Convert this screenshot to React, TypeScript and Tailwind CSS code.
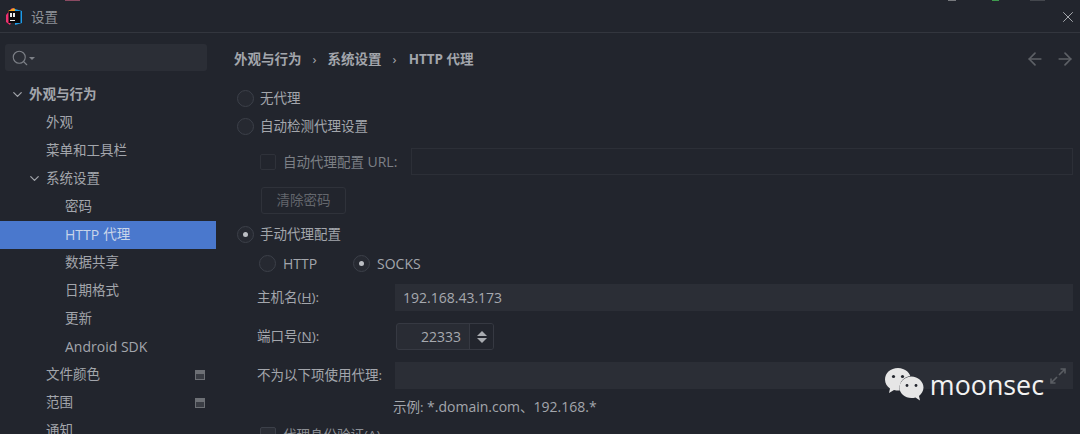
import { ReactNode } from "react";
import { ChevronDown, X, ArrowLeft, ArrowRight, Search } from "lucide-react";

const font = { fontFamily: '"Open Sans", "Noto Sans CJK SC", sans-serif' };

function TreeRow({
  label,
  indent,
  open,
  selected,
  bold,
  badge
}: {
  label: ReactNode;
  indent: string;
  open?: boolean;
  selected?: boolean;
  bold?: boolean;
  badge?: boolean;
}) {
  return (
    <div
      className={`relative flex h-[28px] shrink-0 items-center pb-[2px] ${indent} ${
        selected ? "bg-[#4a78cd] text-[#c9d5ea]" : "text-[#a3a6ac]"
      } ${bold ? "font-bold" : ""}`}
    >
      {open ? <ChevronDown className="absolute ml-[-19px] h-[15px] w-[15px] text-[#a0a3a9]" strokeWidth={2} /> : null}
      {label}
      {badge ? (
        <span className="absolute right-[11px] top-[9px] flex h-[10px] w-[10px] items-center justify-center bg-[#6d7075] pt-[2px]">
          <span className="h-[5px] w-[8px] bg-[#3a3d44]" />
        </span>
      ) : null}
    </div>
  );
}

function Radio({ checked }: { checked?: boolean }) {
  return (
    <span className="flex h-[17px] w-[17px] shrink-0 items-center justify-center rounded-full border-[1.5px] border-[#3c4049] bg-[#262931]">
      {checked ? <span className="h-[5px] w-[5px] rounded-full bg-[#bcbfc4]" /> : null}
    </span>
  );
}

export default function App() {
  return (
    <div className="flex h-[434px] w-[1080px] flex-col overflow-hidden bg-[#22252d] text-[13.5px] text-[#a3a6ac]" style={font}>
      {/* sliver of the window behind */}
      <div className="flex h-[1px] shrink-0">
        <span className="ml-[65px] w-[15px] bg-[#8a4a62]" />
        <span className="ml-[868px] w-[8px] bg-[#77797d]" />
        <span className="ml-[36px] w-[7px] bg-[#3f9a4e]" />
        <span className="ml-[31px] w-[15px] bg-[#44474d]" />
      </div>
      <div className="flex h-[32px] shrink-0 items-center border-b border-[#33363e] pl-[5px] pr-[3px] pt-[1px]">
        <svg width="18" height="18" viewBox="0 0 18 18" className="shrink-0">
          <path d="M1 7 L7 0 L11 2 L5 17 L1 14 Z" fill="#f0306e" />
          <path d="M3 3 L9 0 L12 3 L6 7 Z" fill="#f5a623" />
          <path d="M10 1 L17 3 L17 15 L10 17 Z" fill="#1e9be8" />
          <rect x="3.5" y="3" width="12" height="12" fill="#0b0b0d" />
          <rect x="5" y="5" width="2" height="4" fill="#e8e8e8" />
          <rect x="8" y="5" width="2" height="4" fill="#e8e8e8" />
          <rect x="5" y="12" width="5" height="1" fill="#e8e8e8" />
        </svg>
        <span className="ml-[8px] text-[#8f9298]">设置</span>
        <X className="ml-auto h-[18px] w-[18px] text-[#a8abb0]" strokeWidth={1.3} />
      </div>

      <div className="flex min-h-0 flex-1">
        <aside className="flex w-[216px] shrink-0 flex-col overflow-hidden">
          <div className="mb-[10px] ml-[5px] mr-[9px] mt-[11px] flex h-[27px] shrink-0 items-center rounded-[3px] bg-[#2b2e36] pl-[6px]">
            <Search className="h-[18px] w-[18px] text-[#7d8087]" strokeWidth={1.5} />
            <span className="mt-[1px] h-0 w-0 border-x-[3px] border-t-[3px] border-x-transparent border-t-[#7d8087]" />
          </div>
          <TreeRow label="外观与行为" indent="pl-[29px]" open bold />
          <TreeRow label="外观" indent="pl-[46px]" />
          <TreeRow label="菜单和工具栏" indent="pl-[46px]" />
          <TreeRow label="系统设置" indent="pl-[46px]" open />
          <TreeRow label="密码" indent="pl-[65px]" />
          <TreeRow label={<><span className="mr-[4px] text-[14px]">HTTP</span>代理</>} indent="pl-[65px]" selected />
          <TreeRow label="数据共享" indent="pl-[65px]" />
          <TreeRow label="日期格式" indent="pl-[65px]" />
          <TreeRow label="更新" indent="pl-[65px]" />
          <TreeRow label={<span className="text-[14px]">Android SDK</span>} indent="pl-[65px]" />
          <TreeRow label="文件颜色" indent="pl-[46px]" badge />
          <TreeRow label="范围" indent="pl-[46px]" badge />
          <TreeRow label="通知" indent="pl-[46px]" />
        </aside>

        <main className="relative min-w-0 flex-1 overflow-hidden pl-[18px] pr-[7px]">
          <div className="flex h-[52px] items-center font-bold">
            <span>外观与行为</span>
            <span className="mx-[11px] font-normal">›</span>
            <span>系统设置</span>
            <span className="ml-[11px] mr-[12px] font-normal">›</span>
            <span>HTTP 代理</span>
            <ArrowLeft className="ml-auto h-[20px] w-[20px] text-[#5d6066]" strokeWidth={2} />
            <ArrowRight className="ml-[10px] mr-[-2px] h-[20px] w-[20px] text-[#5d6066]" strokeWidth={2} />
          </div>

          <div className="mt-[-1px] flex h-[28px] items-center gap-[6px] pl-[3px]">
            <Radio />
            <span>无代理</span>
          </div>
          <div className="flex h-[28px] items-center gap-[6px] pl-[3px]">
            <Radio />
            <span>自动检测代理设置</span>
          </div>
          <div className="mt-[8px] flex h-[27px] items-center pl-[26px] text-[#7d8086]">
            <span className="h-[16px] w-[16px] shrink-0 rounded-[2px] border border-[#2f323a]" />
            <span className="ml-[7px] w-[128px] shrink-0">
              自动代理配置 <span className="text-[14px]">URL:</span>
            </span>
            <span className="h-[27px] flex-1 border border-[#2c2f37]" />
          </div>
          <div className="ml-[27px] mt-[12px] flex h-[27px] w-[85px] items-center justify-center rounded-[3px] border border-[#2f323a] text-[#64676d]">
            清除密码
          </div>
          <div className="mt-[6px] flex h-[28px] items-center gap-[6px] pl-[3px]">
            <Radio checked />
            <span>手动代理配置</span>
          </div>
          <div className="mt-[2px] flex h-[28px] items-center pb-[2px] pl-[25px] text-[14px]">
            <Radio />
            <span className="ml-[7px] w-[70px]">HTTP</span>
            <Radio checked />
            <span className="ml-[7px]">SOCKS</span>
          </div>
          <div className="mt-[6px] flex h-[27px] items-center pl-[23px]">
            <span className="w-[138px] shrink-0">
              主机名(<span className="underline">H</span>):
            </span>
            <span className="flex h-[27px] flex-1 items-center bg-[#2b2e36] pl-[8px] text-[14px] text-[#a6a9af]">192.168.43.173</span>
          </div>
          <div className="mt-[12px] flex h-[27px] items-center pl-[23px]">
            <span className="w-[139px] shrink-0">
              端口号(<span className="underline">N</span>):
            </span>
            <span className="flex h-[27px] w-[98px] items-center overflow-hidden rounded-[3px] border border-[#363942] bg-[#292c34]">
              <span className="flex-1 pr-[8px] text-right text-[14px] text-[#a6a9af]">22333</span>
              <span className="flex h-full w-[24px] flex-col items-center justify-center gap-[2px] border-l border-[#363942] bg-[#22252d]">
                <span className="h-0 w-0 border-x-[5px] border-b-[5px] border-x-transparent border-b-[#a8abb0]" />
                <span className="h-0 w-0 border-x-[5px] border-t-[5px] border-x-transparent border-t-[#a8abb0]" />
              </span>
            </span>
          </div>
          <div className="mt-[12px] flex h-[27px] items-center pl-[23px]">
            <span className="w-[138px] shrink-0">不为以下项使用代理:</span>
            <span className="h-[27px] flex-1 bg-[#2b2e36]" />
          </div>
          <div className="mt-[9px] h-[18px] pl-[159px] leading-[18px]">
            示例: <span className="text-[14px]">*.domain.com</span>、<span className="text-[14px]">192.168.*</span>
          </div>
          <div className="mt-[9px] flex h-[20px] items-center pl-[26px] text-[#8b8e94]">
            <span className="h-[16px] w-[16px] shrink-0 rounded-[2px] border border-[#3c4049] bg-[#2b2e36]" />
            <span className="ml-[7px]">代理身份验证(A)</span>
          </div>

          {/* watermark over the form */}
          <div className="absolute right-[36px] top-[334px] flex items-center gap-[6px] text-[#f2f2f2]">
            <svg width="40" height="34" viewBox="0 0 40 34">
              <path d="M14 1 C6.5 1 1 6 1 12.5 C1 16.5 3 19.5 6 21.5 L5 26 L10 23 C11.5 23.4 13 23.6 15 23.6 C22 23.6 27 18.5 27 12.5 C27 6 21 1 14 1 Z" fill="#e6e6e6" />
              <circle cx="27.5" cy="21" r="12" fill="#22252d" />
              <path d="M27.5 9.5 C21 9.5 15.5 14.5 15.5 20.5 C15.5 26.5 21 31 27.5 31 C29 31 30 30.8 31.5 30.4 L36 33.5 L35 29 C37.5 27 39.5 24 39.5 20.5 C39.5 14.5 34 9.5 27.5 9.5 Z" fill="#e6e6e6" />
              <circle cx="9.5" cy="9.5" r="1.6" fill="#22252d" />
              <circle cx="18.5" cy="9.5" r="1.6" fill="#22252d" />
              <circle cx="23" cy="18.5" r="1.4" fill="#22252d" />
              <circle cx="32" cy="18.5" r="1.4" fill="#22252d" />
            </svg>
            <span className="pt-[3px] text-[26.8px] leading-none" style={{ fontFamily: '"Open Sans", sans-serif' }}>
              moonsec
            </span>
          </div>
          <svg width="16" height="16" viewBox="0 0 16 16" className="absolute right-[14px] top-[335px] text-[#5a5d63]" fill="none" stroke="currentColor" strokeWidth="1.6">
            <path d="M9 7 L15 1 M10.5 1 H15 V5.5 M7 9 L1 15 M1 10.5 V15 H5.5" />
          </svg>
        </main>
      </div>
    </div>
  );
}
